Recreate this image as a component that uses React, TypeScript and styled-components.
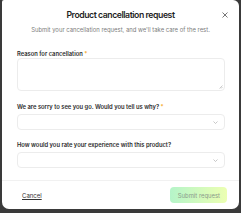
import React from "react";
import styled, { createGlobalStyle } from "styled-components";

const Global = createGlobalStyle`
  html, body { margin: 0; padding: 0; background: #3a3a3a; }
  body { font-family: Inter, "Noto Sans", sans-serif; }
  * { box-sizing: border-box; }
`;

const Page = styled.div`
  width: 241px;
  height: 213px;
  padding: 0 2px 4px 2px;
  display: flex;
`;

const Modal = styled.div`
  position: relative;
  flex: 1;
  background: #fff;
  border-radius: 2px 6px 7px 7px;
  display: flex;
  flex-direction: column;
`;

const Header = styled.div`
  padding-top: 9px;
  text-align: center;
`;

const Title = styled.div`
  font-size: 8.7px;
  font-weight: 600;
  letter-spacing: -0.45px;
  color: #1f1f1f;
  line-height: 12px;
`;

const Subtitle = styled.div`
  margin-top: 5px;
  font-size: 5.9px;
  color: #7d7d7d;
  line-height: 8px;
`;

const Close = styled.button`
  position: absolute;
  top: 11px;
  right: 10px;
  width: 8px;
  height: 8px;
  padding: 0;
  border: 0;
  background: none;
  display: flex;
  align-items: center;
  justify-content: center;
`;

const Body = styled.div`
  padding: 16px 14px 0 15px;
  display: flex;
  flex-direction: column;
`;

const Field = styled.div<{ gap: number; top?: number }>`
  display: flex;
  flex-direction: column;
  gap: ${p => p.gap}px;
  margin-top: ${p => p.top || 0}px;
`;

const Label = styled.div`
  font-size: 5.8px;
  font-weight: 600;
  color: #2a2a2a;
  line-height: 8px;
`;

const Req = styled.span`
  color: #f5a623;
`;

const Area = styled.div`
  position: relative;
  height: 33px;
  border: 1px solid #ececec;
  border-radius: 4px;
`;

const Grip = styled.svg`
  position: absolute;
  right: 1px;
  bottom: 1px;
`;

const Select = styled.div`
  height: 16px;
  border: 1px solid #ececec;
  border-radius: 4px;
  display: flex;
  align-items: center;
  justify-content: flex-end;
  padding-right: 6px;
`;

const Footer = styled.div`
  margin-top: auto;
  height: 29px;
  border-top: 1px solid #f1f1f1;
  display: flex;
  align-items: center;
  justify-content: space-between;
  padding: 0 12px 0 20px;
`;

const Cancel = styled.a`
  font-size: 6px;
  color: #333;
  text-decoration: underline;
`;

const Submit = styled.button`
  height: 16px;
  padding: 0 7px 0 8px;
  border: 0;
  border-radius: 4px;
  background: linear-gradient(90deg, #b5f4c9, #ecffb2);
  color: #8a9a8a;
  font-family: inherit;
  font-size: 5.9px;
`;

const Chevron = () => (
  <svg width="5" height="3" viewBox="0 0 5 3">
    <path d="M0.5 0.5 L2.5 2.5 L4.5 0.5" stroke="#b0b0b0" strokeWidth="0.7" fill="none" />
  </svg>
);

export default function App() {
  return (
    <>
      <Global />
      <Page>
        <Modal>
          <Header>
            <Title>Product cancellation request</Title>
            <Subtitle>Submit your cancellation request, and we'll take care of the rest.</Subtitle>
          </Header>
          <Close>
            <svg width="6" height="6" viewBox="0 0 6 6">
              <path d="M0.5 0.5 L5.5 5.5 M5.5 0.5 L0.5 5.5" stroke="#666" strokeWidth="0.9" />
            </svg>
          </Close>
          <Body>
            <Field gap={0}>
              <Label>Reason for cancellation <Req>*</Req></Label>
              <Area>
                <Grip width="4" height="4" viewBox="0 0 4 4">
                  <path d="M3.5 0.5 L0.5 3.5 M3.5 2 L2 3.5" stroke="#999" strokeWidth="0.5" />
                </Grip>
              </Area>
            </Field>
            <Field gap={3} top={12}>
              <Label>We are sorry to see you go. Would you tell us why? <Req>*</Req></Label>
              <Select><Chevron /></Select>
            </Field>
            <Field gap={3} top={11}>
              <Label>How would you rate your experience with this product?</Label>
              <Select><Chevron /></Select>
            </Field>
          </Body>
          <Footer>
            <Cancel>Cancel</Cancel>
            <Submit>Submit request</Submit>
          </Footer>
        </Modal>
      </Page>
    </>
  );
}
